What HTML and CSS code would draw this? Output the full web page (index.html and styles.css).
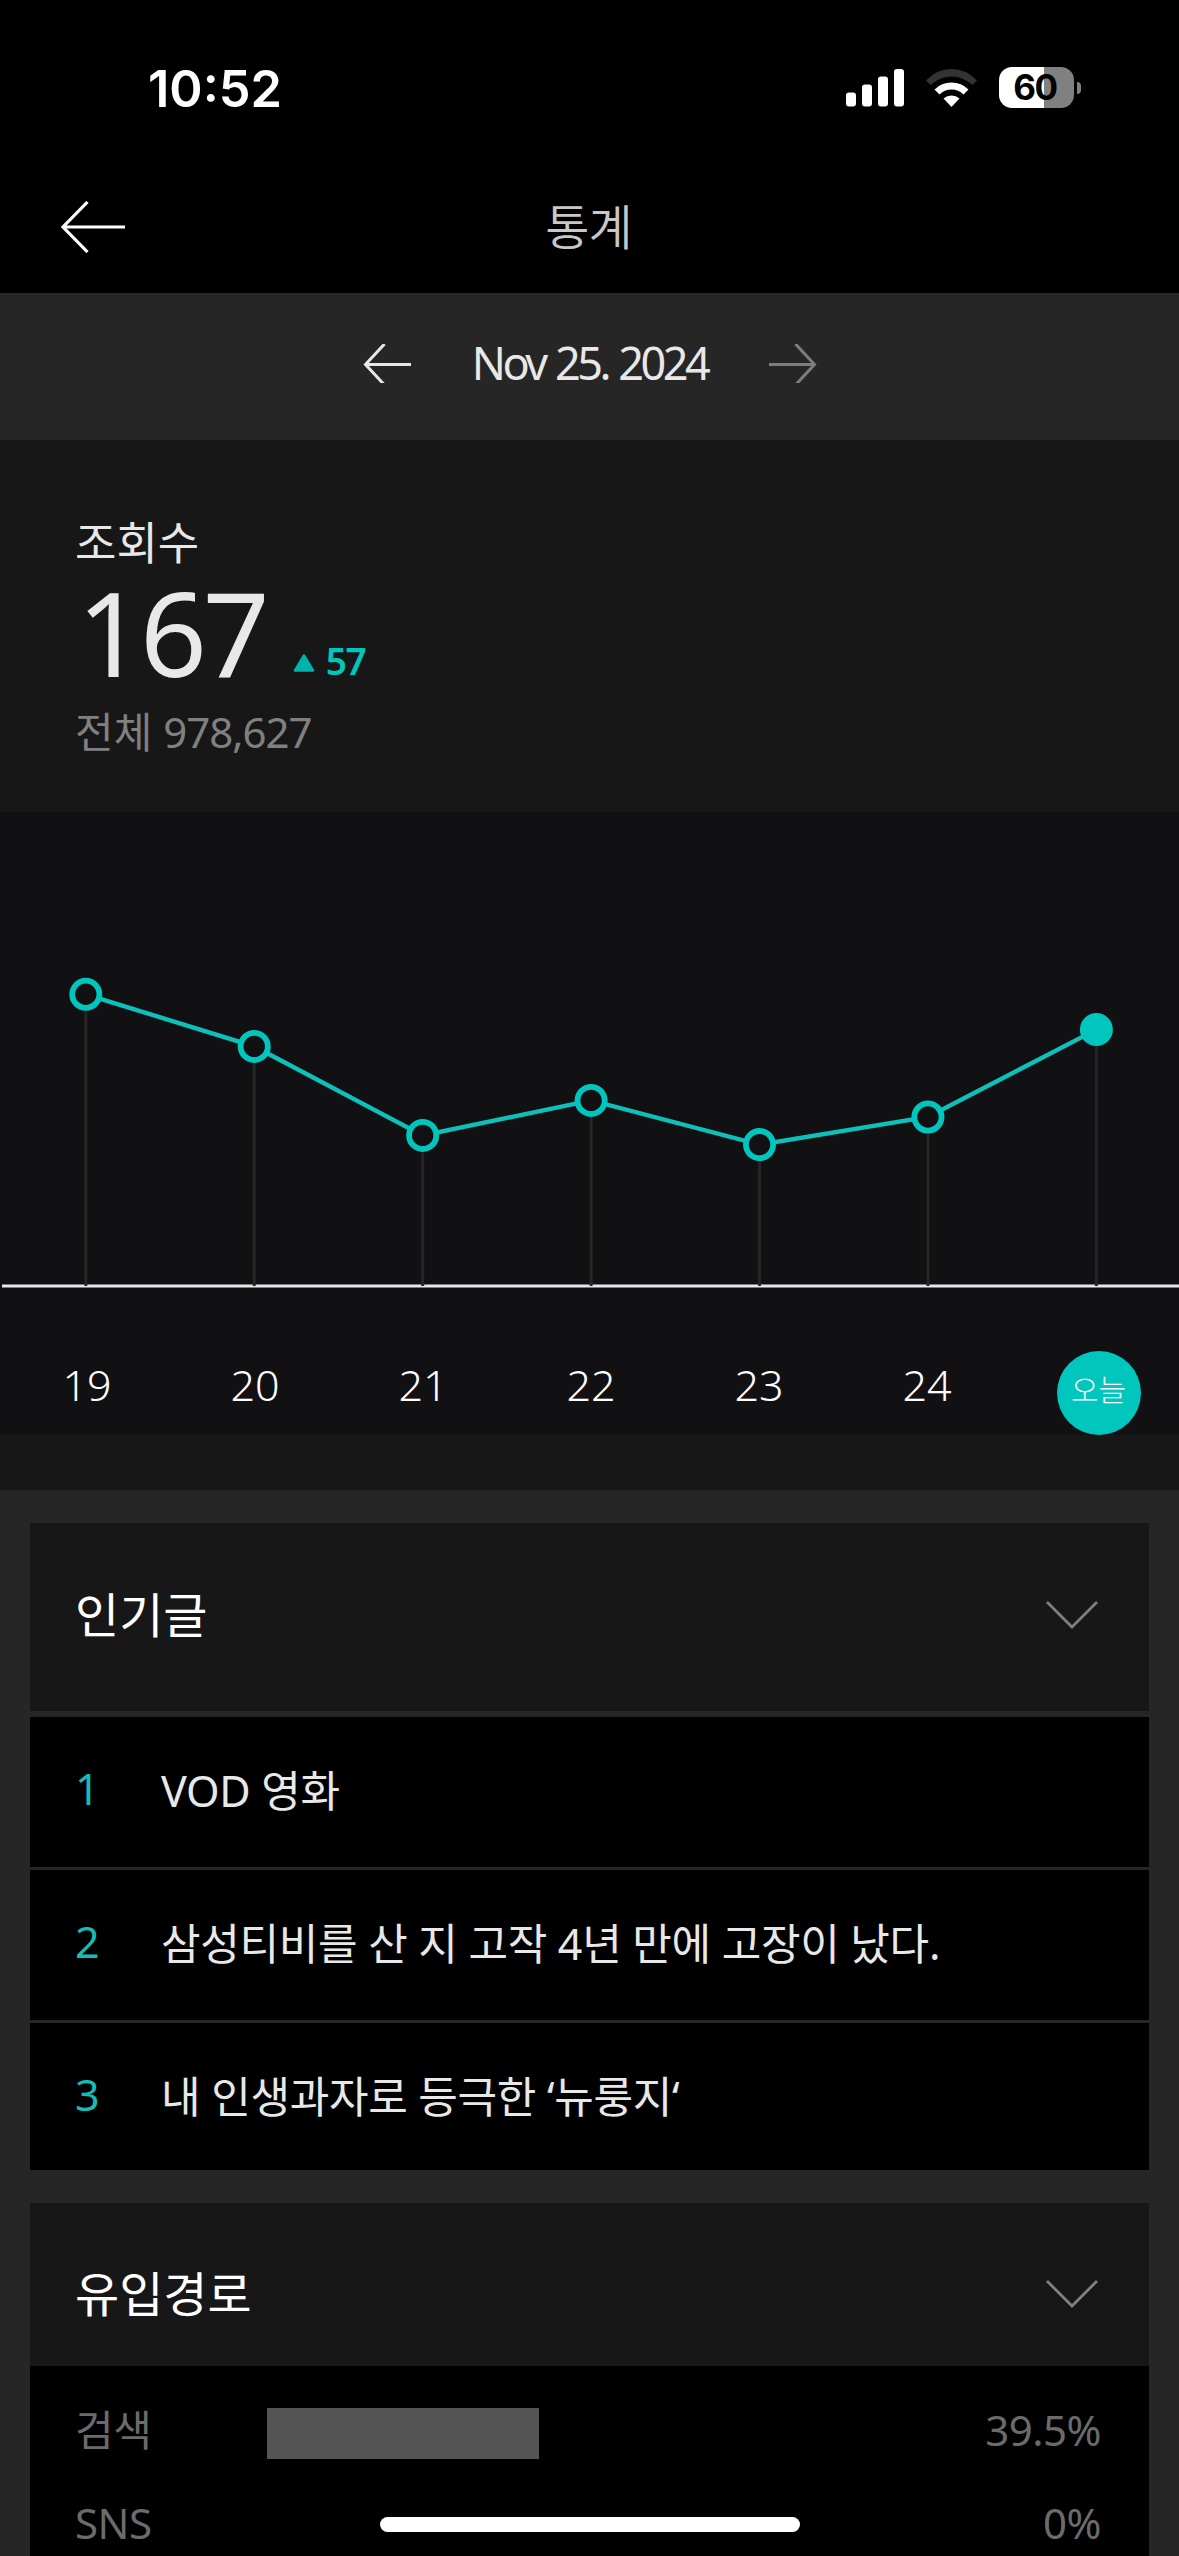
FILE: index.html
```html
<!DOCTYPE html>
<html lang="ko">
  <head>
    <meta charset="UTF-8" />
    <meta name="viewport" content="width=device-width, initial-scale=1.0" />
    <title>통계</title>
    <link rel="stylesheet" href="styles.css">
  </head>

  <body>
    <div class="status-bar">
      <span class="time">10:52</span>
      <div class="status-icons">
        <svg class="signal" width="58" height="38" viewBox="0 0 58 38" fill="#fff">
          <rect x="0" y="23.5" width="10" height="14" rx="3" />
          <rect x="16" y="15.5" width="10" height="22" rx="3" />
          <rect x="32" y="7.5" width="10" height="30" rx="3" />
          <rect x="48" y="0" width="10" height="37.5" rx="3" />
        </svg>
        <svg class="wifi" width="51" height="38" viewBox="0 0 51 38">
          <path d="M0 11.5Q10.500 0 25.500 0T51 11.500L46.500 16Q37 7.500 25.500 7.500T4.500 16Z" fill="#333" />
          <path d="M8.500 20.500Q15.500 13.500 25.500 13.500T42.500 20.500L37.500 25.500Q32.500 20.500 25.500 20.500T13.500 25.500Z" fill="#fff" />
          <path d="M17.500 29.500Q21 26.500 25.500 26.500T33.500 29.500L25.500 38Z" fill="#fff" />
        </svg>
        <div class="battery"><span>60</span></div>
        <div class="battery-tip"></div>
      </div>
    </div>

    <header class="header">
      <svg class="back" width="66" height="52" viewBox="0 0 66 52" fill="none" stroke="#fff" stroke-width="3.200">
        <path d="M65 26H3M27.500 1L3 26L27.500 51" />
      </svg>
      <h1>통계</h1>
    </header>

    <div class="date-bar">
      <svg width="48" height="39" viewBox="0 0 48 39" fill="none" stroke="#e8e8e8" stroke-width="3">
        <path d="M48 20.500H2.500M21.500 0L2.500 20.500L21.500 41" />
      </svg>
      <span class="date">Nov 25. 2024</span>
      <svg width="48" height="39" viewBox="0 0 48 39" fill="none" stroke="#7d7d7d" stroke-width="3">
        <path d="M0 20.500H45.500M26.500 0L45.500 20.500L26.500 41" />
      </svg>
    </div>

    <section class="summary">
      <h2>조회수</h2>
      <div class="views">
        <strong>167</strong>
        <svg class="up" width="22" height="18" viewBox="0 0 22 18">
          <path d="M11 1.500L20 16.500H2Z" fill="#00b2aa" stroke="#00b2aa" stroke-width="2.500" stroke-linejoin="round" />
        </svg>
        <span class="diff">57</span>
      </div>
      <p class="total">전체 <span>978,627</span></p>
    </section>

    <section class="chart">
      <svg class="graph" id="graph" width="1179" height="478" viewBox="0 0 1179 478"></svg>
      <div class="days">
        <span>19</span>
        <span>20</span>
        <span>21</span>
        <span>22</span>
        <span>23</span>
        <span>24</span>
        <span class="today">오늘</span>
      </div>
    </section>

    <main class="cards">
      <section class="card popular">
        <div class="card-title">
          <h2>인기글</h2>
          <svg width="52" height="28" viewBox="0 0 52 28" fill="none" stroke="#808080" stroke-width="2.800">
            <path d="M1 1L26 26L51 1" />
          </svg>
        </div>
        <ol>
          <li><span class="rank">1</span><span>VOD 영화</span></li>
          <li><span class="rank">2</span><span>삼성티비를 산 지 고작 4년 만에 고장이 났다.</span></li>
          <li><span class="rank">3</span><span>내 인생과자로 등극한 ‘뉴룽지‘</span></li>
        </ol>
      </section>

      <section class="card referrer">
        <div class="card-title">
          <h2>유입경로</h2>
          <svg width="52" height="28" viewBox="0 0 52 28" fill="none" stroke="#808080" stroke-width="2.800">
            <path d="M1 1L26 26L51 1" />
          </svg>
        </div>
        <div class="sources">
          <div class="source">
            <span>검색</span>
            <div class="track"><div class="bar" style="width: 39.5%"></div></div>
            <span class="percent">39.5%</span>
          </div>
          <div class="source">
            <span>SNS</span>
            <div class="track"><div class="bar" style="width: 0%"></div></div>
            <span class="percent">0%</span>
          </div>
        </div>
      </section>
    </main>

    <div class="home-indicator"></div>

    <script>
      const points = [182.3, 234.4, 323.4, 288.4, 332.6, 305, 217.6];
      const base = 474;
      const x = (i) => 85.8 + i * 168.43;

      const stems = points
        .map((y, i) => `<line class="stem" x1="${x(i)}" y1="${y}" x2="${x(i)}" y2="${base}" />`)
        .join("");

      const path = points.map((y, i) => `${x(i)},${y}`).join(" ");

      const dots = points
        .map((y, i) => {
          const last = i === points.length - 1;
          return `<circle class="dot${last ? " active" : ""}" cx="${x(i)}" cy="${y}" r="13.6" />`;
        })
        .join("");

      document.getElementById("graph").innerHTML = `
        <line class="axis" x1="2" y1="${base}" x2="1179" y2="${base}" />
        ${stems}
        <polyline class="line" points="${path}" />
        ${dots}`;
    </script>
  </body>
</html>
```
FILE: styles.css
```css
* {
  margin: 0;
  padding: 0;
  box-sizing: border-box;
}

body {
  position: relative;
  width: 1179px;
  height: 2556px;
  overflow: hidden;
  background-color: #262626;
  color: #e8e8e8;
  font-family: "Noto Sans", "Noto Sans CJK KR", sans-serif;
  font-size: 42px;
}

h1,
h2 {
  font-weight: 400;
}

svg {
  display: block;
  flex-shrink: 0;
}

.status-bar {
  display: flex;
  justify-content: space-between;
  height: 160px;
  padding: 67px 98px 0 148px;
  background-color: #000;
  font-family: Inter, sans-serif;
}

.time {
  color: #fff;
  font-size: 50.5px;
  font-weight: 600;
  line-height: 43px;
}

.status-icons {
  display: flex;
  align-items: center;
  height: 41px;
}

.wifi {
  margin: 0 22px;
}

.battery {
  width: 75px;
  height: 41px;
  border-radius: 13px;
  background: linear-gradient(to right, #fff 60%, #808080 60%);
  color: #000;
  font-size: 35px;
  font-weight: 700;
  line-height: 41px;
  letter-spacing: -1.5px;
  text-indent: -3px;
  text-align: center;
}

.battery-tip {
  width: 4px;
  height: 12px;
  margin-left: 3px;
  border-radius: 0 4px 4px 0;
  background-color: #808080;
}

.header {
  display: grid;
  grid-template-columns: 1fr auto 1fr;
  align-items: center;
  height: 133px;
  padding: 0 62px 0 60px;
  background-color: #000;
}

.header h1 {
  color: #c8c8c8;
  font-size: 48px;
  font-weight: 350;
  line-height: 60px;
  letter-spacing: -1px;
}

.date-bar {
  display: flex;
  justify-content: center;
  align-items: center;
  height: 147px;
  padding-bottom: 7px;
}

.date {
  width: 358px;
  font-size: 45px;
  line-height: 60px;
  letter-spacing: -3.5px;
  word-spacing: 2px;
  text-align: center;
}

.summary {
  height: 372px;
  padding: 70px 75px 0;
  background-color: #171717;
}

.summary h2 {
  font-size: 45px;
  line-height: 66px;
}

.views {
  display: flex;
  align-items: baseline;
  height: 116px;
}

.views strong {
  padding-left: 2px;
  font-size: 117px;
  font-weight: 400;
  line-height: 112px;
  letter-spacing: -4px;
}

.up {
  margin: 0 11px 0 27px;
  transform: translateY(-5px);
}

.diff {
  color: #00c6be;
  font-size: 37px;
  font-weight: 600;
  letter-spacing: -1.5px;
  transform: translateY(-2px);
}

.total {
  padding-top: 10px;
  color: #808080;
  font-size: 42px;
  line-height: 60px;
}

.total span {
  letter-spacing: -1px;
}

.chart {
  height: 678px;
  background-color: #111113;
  border-bottom: 55px solid #171717;
}

.stem {
  stroke: #262626;
  stroke-width: 3;
}

.axis {
  stroke: #e8e8ec;
  stroke-width: 3.2;
}

.line {
  fill: none;
  stroke: #0dc0b9;
  stroke-width: 4.4;
}

.dot {
  fill: #111113;
  stroke: #00c6be;
  stroke-width: 5.8;
}

.dot.active {
  fill: #00c6be;
}

.days {
  display: grid;
  grid-template-columns: repeat(7, 1fr);
  justify-items: center;
  padding: 61px 0 0 3px;
  color: #fff;
  font-size: 43px;
  font-weight: 350;
  line-height: 67px;
}

.today {
  width: 84px;
  height: 84px;
  margin-left: 7px;
  border-radius: 50%;
  background-color: #00c6be;
  font-size: 30px;
  font-weight: 300;
  line-height: 78px;
  text-align: center;
}

.cards {
  padding: 33px 30px 0;
}

.card {
  margin-bottom: 33px;
  background-color: #000;
}

.card-title {
  display: flex;
  justify-content: space-between;
  align-items: center;
  height: 188px;
  padding: 0 51px 5px 45px;
  background-color: #171717;
}

.card-title h2 {
  color: #fff;
  font-size: 48px;
  line-height: 60px;
}

.popular ol {
  list-style: none;
  border-top: 6px solid #262626;
}

.popular li {
  display: flex;
  align-items: center;
  height: 153px;
  padding: 0 45px 8px;
  border-bottom: 3px solid #262626;
  font-size: 43px;
  letter-spacing: -0.3px;
}

.popular li:last-child {
  height: 147px;
  padding-bottom: 4px;
  border-bottom: 0;
}

.rank {
  width: 86px;
  color: #15bdb5;
}

.referrer .card-title {
  height: 163px;
  padding: 19px 51px 0 45px;
}

.sources {
  height: 200px;
  padding: 21px 48px 0 45px;
  color: #6b6b6b;
}

.source {
  display: grid;
  grid-template-columns: 192px 689px 145px;
  align-items: center;
  height: 93px;
  line-height: 60px;
}

.source > span {
  padding-bottom: 8px;
  letter-spacing: -0.5px;
}

.track,
.bar {
  height: 51px;
}

.bar {
  background-color: #545454;
}

.percent {
  text-align: right;
}

.home-indicator {
  position: absolute;
  bottom: 24px;
  left: 380px;
  width: 420px;
  height: 15px;
  border-radius: 8px;
  background-color: #fff;
}
```
